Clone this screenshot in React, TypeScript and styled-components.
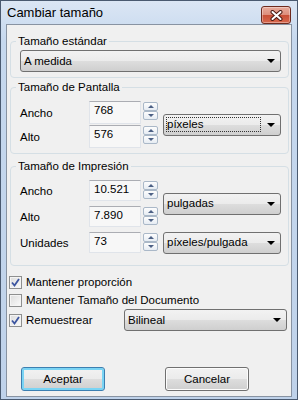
import * as React from 'react';
import styled, { createGlobalStyle, css } from 'styled-components';

const GlobalStyle = createGlobalStyle`
    html, body {
        margin: 0;
        padding: 0;
        background: #ffffff;
    }
    body {
        font-family: "Liberation Sans", Arial, sans-serif;
        font-size: 11.5px;
        color: #000000;
    }
`;

const Window = styled.div`
    width: 298px;
    height: 400px;
    box-sizing: border-box;
    border: 1px solid #4a5a70;
    padding: 0 5px 2px 5px;
    background: linear-gradient(#dbe6f4, #c6d8ee 40px, #bfd2ea);
    display: flex;
    flex-direction: column;
`;

const TitleBar = styled.div`
    height: 23px;
    display: flex;
    align-items: center;
    justify-content: space-between;
`;

const Title = styled.span`
    font-size: 13px;
    padding-left: 1px;
    color: #000000;
`;

const CloseButton = styled.div`
    width: 30px;
    height: 18px;
    margin-right: 1px;
    align-self: flex-end;
    box-sizing: border-box;
    border: 1px solid #6e2a1e;
    border-radius: 3px;
    background: linear-gradient(#e8ab9c 0%, #dd8e7c 48%, #c84f36 52%, #d9694e 100%);
    box-shadow: inset 0 0 0 1px rgba(255, 255, 255, 0.35);
    display: flex;
    align-items: center;
    justify-content: center;
`;

const Client = styled.div`
    flex: 1;
    border: 1px solid #8893a2;
    background: #f0f0f0;
    display: flex;
    flex-direction: column;
`;

const Group = styled.fieldset<{ $top: number; $bottom: number }>`
    margin: ${(p) => p.$top}px 2px 0 3px;
    padding: 0 0 ${(p) => p.$bottom}px 0;
    border: 1px solid #d5dfe5;
    border-radius: 4px;
    min-inline-size: 0;
`;

const Legend = styled.legend`
    margin-left: 5px;
    padding: 0 2px;
    line-height: 14px;
    font-size: 11.5px;
`;

const GroupBody = styled.div<{ $top: number }>`
    padding: ${(p) => p.$top}px 7px 0 9px;
`;

const FieldGrid = styled.div<{ $rowGap: number; $rowHeight: number }>`
    display: grid;
    grid-template-columns: 64px 69px 118px;
    grid-auto-rows: ${(p) => p.$rowHeight}px;
    column-gap: 5px;
    row-gap: ${(p) => p.$rowGap}px;
    align-items: center;
`;

const FieldLabel = styled.span`
    grid-column: 1;
`;

const SpinField = styled.div`
    grid-column: 2;
    display: flex;
    gap: 2px;
    height: 100%;
`;

const TextBox = styled.div`
    width: 52px;
    height: 100%;
    box-sizing: border-box;
    border: 1px solid #e0e4ea;
    border-top-color: #abadb3;
    background: #f7f7f7;
    padding: 2px 0 0 4px;
`;

const Spinner = styled.div`
    width: 15px;
    display: flex;
    flex-direction: column;
    padding-top: 1px;
`;

const SpinButton = styled.div`
    width: 15px;
    height: 9px;
    box-sizing: border-box;
    border: 1px solid #aab8c8;
    border-radius: 2px;
    background: linear-gradient(#fdfdfd, #e6ecf3);
    display: flex;
    align-items: center;
    justify-content: center;
`;

const SpinArrow = styled.span<{ $down?: boolean }>`
    width: 0;
    height: 0;
    border-left: 3px solid transparent;
    border-right: 3px solid transparent;
    ${(p) =>
        p.$down
            ? css`
                  border-top: 3px solid #4d6185;
              `
            : css`
                  border-bottom: 3px solid #4d6185;
              `}
`;

const Combo = styled.div<{ $span?: number }>`
    height: 22px;
    box-sizing: border-box;
    border: 1px solid #707070;
    border-radius: 3px;
    background: linear-gradient(#f2f2f2 0%, #ebebeb 50%, #dddddd 51%, #cfcfcf 100%);
    display: flex;
    align-items: center;
    padding: 0 5px 0 2px;
    gap: 6px;
    ${(p) =>
        p.$span &&
        css`
            grid-column: 3;
            grid-row: span ${p.$span};
            align-self: center;
        `}
`;

const ComboText = styled.span<{ $focused?: boolean }>`
    flex: 1;
    padding: 1px 1px 2px;
    outline: ${(p) => (p.$focused ? '1px dotted #333' : 'none')};
    outline-offset: -1px;
`;

const ComboArrow = styled.span`
    width: 0;
    height: 0;
    border-left: 4px solid transparent;
    border-right: 4px solid transparent;
    border-top: 4px solid #000000;
`;

const Options = styled.div`
    margin-top: 7px;
    padding-left: 2px;
    display: flex;
    flex-direction: column;
`;

const OptionRow = styled.div<{ $height: number }>`
    height: ${(p) => p.$height}px;
    display: grid;
    grid-template-columns: 115px 163px;
    align-items: center;
`;

const CheckLabel = styled.label<{ $wide?: boolean }>`
    display: flex;
    align-items: center;
    gap: 4px;
    white-space: nowrap;
    ${(p) =>
        p.$wide &&
        css`
            grid-column: 1 / -1;
        `}
`;

const CheckBox = styled.span`
    flex-shrink: 0;
    width: 13px;
    height: 13px;
    box-sizing: border-box;
    border: 1px solid #8e8f8f;
    background: linear-gradient(135deg, #dcdcdc, #fbfbfb);
    box-shadow: inset 0 0 0 1px #f4f4f4;
    display: flex;
    align-items: center;
    justify-content: center;
`;

const ButtonRow = styled.div`
    margin-top: auto;
    padding: 0 0 5px 14px;
    display: flex;
    gap: 60px;
`;

const DialogButton = styled.div<{ $default?: boolean }>`
    width: 84px;
    height: 24px;
    box-sizing: border-box;
    border: 1px solid ${(p) => (p.$default ? '#3c7fb1' : '#707070')};
    border-radius: 3px;
    background: linear-gradient(#f2f2f2 0%, #ebebeb 50%, #dddddd 51%, #cfcfcf 100%);
    box-shadow: inset 0 0 0 ${(p) => (p.$default ? '2px #7ad4f4' : '1px #fcfcfc')};
    display: flex;
    align-items: center;
    justify-content: center;
`;

const CheckMark = () => (
    <svg width="9" height="9" viewBox="0 0 9 9">
        <path d="M1 4.5 L3.5 7.5 L8 1" fill="none" stroke="#3c55a0" strokeWidth="1.8" />
    </svg>
);

const CloseGlyph = () => (
    <svg width="13" height="11" viewBox="0 0 13 11">
        <path d="M2.5 2 L10.5 9 M10.5 2 L2.5 9" stroke="#4a1a12" strokeWidth="4" strokeLinecap="round" />
        <path d="M2.5 2 L10.5 9 M10.5 2 L2.5 9" stroke="#ffffff" strokeWidth="2" strokeLinecap="round" />
    </svg>
);

const Spin: React.FC<{ value: string }> = ({ value }) => (
    <SpinField>
        <TextBox>{value}</TextBox>
        <Spinner>
            <SpinButton>
                <SpinArrow />
            </SpinButton>
            <SpinButton>
                <SpinArrow $down />
            </SpinButton>
        </Spinner>
    </SpinField>
);

const Check: React.FC<{ checked?: boolean; label: string; wide?: boolean }> = ({ checked, label, wide }) => (
    <CheckLabel $wide={wide}>
        <CheckBox>{checked && <CheckMark />}</CheckBox>
        {label}
    </CheckLabel>
);

const App: React.FC = () => (
    <>
        <GlobalStyle />
        <Window>
            <TitleBar>
                <Title>Cambiar tamaño</Title>
                <CloseButton>
                    <CloseGlyph />
                </CloseButton>
            </TitleBar>
            <Client>
                <Group $top={9} $bottom={5}>
                    <Legend>Tamaño estándar</Legend>
                    <GroupBody $top={2}>
                        <Combo>
                            <ComboText>A medida</ComboText>
                            <ComboArrow />
                        </Combo>
                    </GroupBody>
                </Group>

                <Group $top={2} $bottom={5}>
                    <Legend>Tamaño de Pantalla</Legend>
                    <GroupBody $top={7}>
                        <FieldGrid $rowGap={1} $rowHeight={23}>
                            <FieldLabel>Ancho</FieldLabel>
                            <Spin value="768" />
                            <Combo $span={2}>
                                <ComboText $focused>píxeles</ComboText>
                                <ComboArrow />
                            </Combo>
                            <FieldLabel>Alto</FieldLabel>
                            <Spin value="576" />
                        </FieldGrid>
                    </GroupBody>
                </Group>

                <Group $top={5} $bottom={12}>
                    <Legend>Tamaño de Impresión</Legend>
                    <GroupBody $top={7}>
                        <FieldGrid $rowGap={5} $rowHeight={21}>
                            <FieldLabel>Ancho</FieldLabel>
                            <Spin value="10.521" />
                            <Combo $span={2}>
                                <ComboText>pulgadas</ComboText>
                                <ComboArrow />
                            </Combo>
                            <FieldLabel>Alto</FieldLabel>
                            <Spin value="7.890" />
                            <FieldLabel>Unidades</FieldLabel>
                            <Spin value="73" />
                            <Combo $span={1}>
                                <ComboText>píxeles/pulgada</ComboText>
                                <ComboArrow />
                            </Combo>
                        </FieldGrid>
                    </GroupBody>
                </Group>

                <Options>
                    <OptionRow $height={18}>
                        <Check checked wide label="Mantener proporción" />
                    </OptionRow>
                    <OptionRow $height={18}>
                        <Check wide label="Mantener Tamaño del Documento" />
                    </OptionRow>
                    <OptionRow $height={22}>
                        <Check checked label="Remuestrear" />
                        <Combo>
                            <ComboText>Bilineal</ComboText>
                            <ComboArrow />
                        </Combo>
                    </OptionRow>
                </Options>

                <ButtonRow>
                    <DialogButton $default>Aceptar</DialogButton>
                    <DialogButton>Cancelar</DialogButton>
                </ButtonRow>
            </Client>
        </Window>
    </>
);

export default App;
